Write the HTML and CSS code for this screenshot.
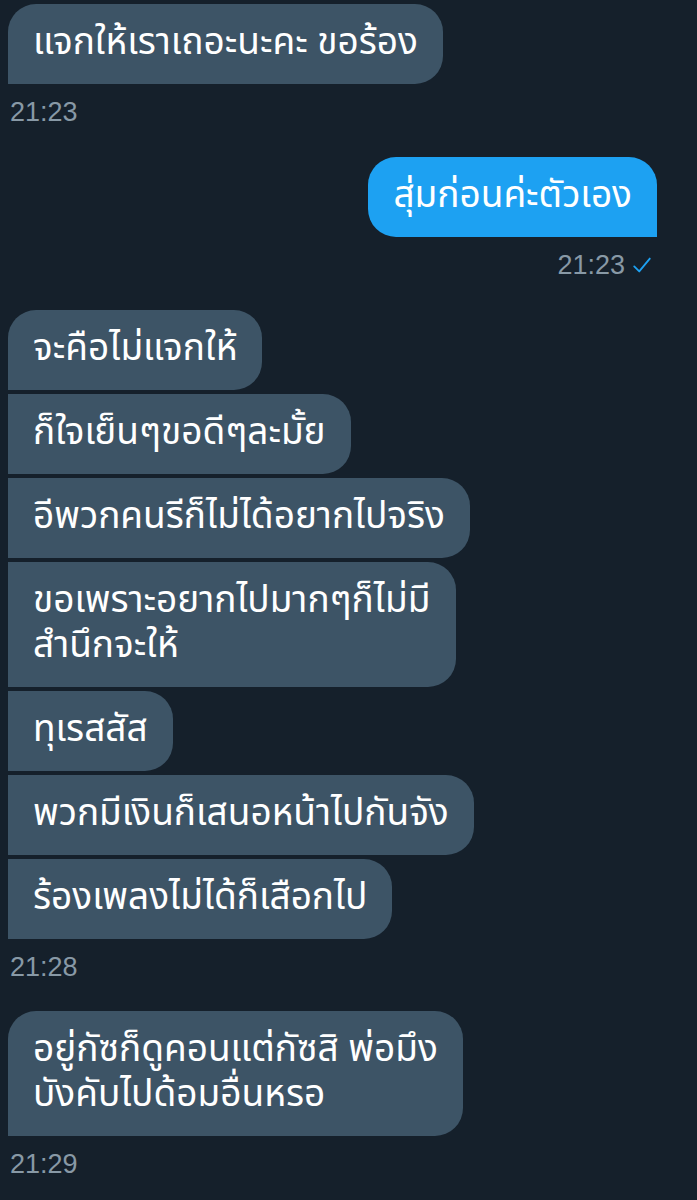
FILE: index.html
```html
<!DOCTYPE html>
<html lang="th">
<head>
  <meta charset="UTF-8">
  <meta name="viewport" content="width=device-width, initial-scale=1.0">
  <title>Messages</title>
  <link rel="stylesheet" href="styles.css">
</head>
<body>
  <main class="thread">
    <div class="group received">
      <div class="bubble">แจกให้เราเถอะนะคะ ขอร้อง</div>
      <div class="time">21:23</div>
    </div>

    <div class="group sent">
      <div class="bubble">สุ่มก่อนค่ะตัวเอง</div>
      <div class="time">21:23
        <svg class="check" viewBox="0 0 24 24" width="22" height="22"><path d="M3.5 13.5l5.5 5.5L20.5 5" fill="none" stroke="currentColor" stroke-width="2" stroke-linecap="round" stroke-linejoin="round"/></svg>
      </div>
    </div>

    <div class="group received">
      <div class="bubble">จะคือไม่แจกให้</div>
      <div class="bubble">ก็ใจเย็นๆขอดีๆละมั้ย</div>
      <div class="bubble">อีพวกคนรีก็ไม่ได้อยากไปจริง</div>
      <div class="bubble">ขอเพราะอยากไปมากๆก็ไม่มี<br>สำนึกจะให้</div>
      <div class="bubble">ทุเรสสัส</div>
      <div class="bubble">พวกมีเงินก็เสนอหน้าไปกันจัง</div>
      <div class="bubble">ร้องเพลงไม่ได้ก็เสือกไป</div>
      <div class="time">21:28</div>
    </div>

    <div class="group received last">
      <div class="bubble">อยู่กัซก็ดูคอนแต่กัซสิ พ่อมึง<br>บังคับไปด้อมอื่นหรอ</div>
      <div class="time">21:29</div>
    </div>
  </main>
</body>
</html>
```

FILE: styles.css
```css
:root {
  --bg: #15202b;
  --bubble: #3d5466;
  --blue: #1da1f2;
  --muted: #8899a6;
  --text: #ffffff;
  --font-thai: 'Noto Sans Thai', 'Noto Sans', 'Liberation Sans', sans-serif;
  --font-ui: 'Liberation Sans', Arial, sans-serif;
}

html, body {
  background-color: var(--bg);
}

body {
  margin: 0;
  color: var(--text);
  font-family: var(--font-thai);
}

.thread {
  display: flex;
  flex-direction: column;
  gap: 31px;
  padding: 4px 40px 0 8px;
}

.group {
  display: flex;
  flex-direction: column;
  gap: 4px;
}

.received {
  align-items: flex-start;
}

.sent {
  align-items: flex-end;
  margin-top: -1px;
  margin-bottom: -1px;
}

.last {
  margin-top: -2px;
}

.bubble {
  font-size: 37px;
  line-height: 45px;
  padding: 17px 25px 18px;
  background: var(--bubble);
  border-radius: 0 28px 28px 0;
}

.received .bubble:first-child {
  border-top-left-radius: 28px;
}

.sent .bubble {
  background: var(--blue);
  border-radius: 28px 28px 0 28px;
}

.time {
  display: flex;
  align-items: center;
  gap: 6px;
  margin-top: 9px;
  padding-left: 2px;
  font-family: var(--font-ui);
  font-size: 27px;
  line-height: 30px;
  color: var(--muted);
}

.sent .time {
  margin-top: 9px;
  padding-right: 4px;
}

.check {
  color: var(--blue);
}
```
